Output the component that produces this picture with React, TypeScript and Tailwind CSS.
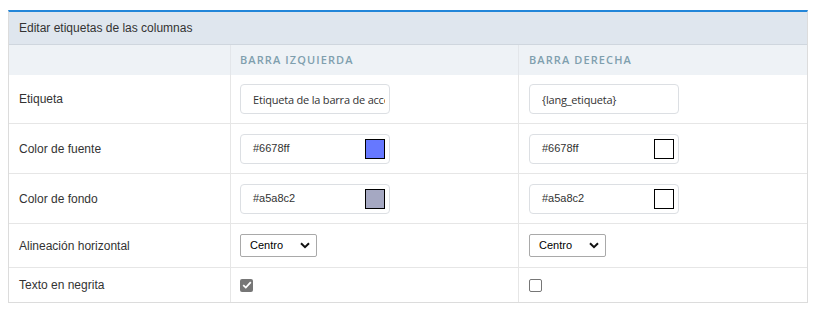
import React from 'react';

const labelFont = { fontFamily: '"Liberation Sans", Arial, sans-serif' };
const headFont = { fontFamily: '"Open Sans", "Noto Sans", sans-serif' };

const Swatch = ({ color }: { color?: string }) => (
  <span
    className="block w-5 h-5 border border-black"
    style={{ backgroundColor: color ?? '#ffffff' }}
  />
);

const ColorField = ({ value, swatch }: { value: string; swatch?: string }) => (
  <div className="flex items-center justify-between w-[150px] h-[30px] pl-3 pr-[4px] bg-white border border-[#dcdfe3] rounded-[4px]">
    <span className="text-[11px] text-[#333]" style={labelFont}>{value}</span>
    <Swatch color={swatch} />
  </div>
);

const TextField = ({ value }: { value: string }) => (
  <input
    readOnly
    value={value}
    className="w-[150px] h-[30px] pl-3 pr-1 bg-white border border-[#dcdfe3] rounded-[4px] text-[11px] text-[#333] outline-none"
    style={{ fontFamily: '"Open Sans", "Noto Sans", sans-serif', letterSpacing: '-0.2px' }}
  />
);

const SelectField = () => (
  <div className="flex items-center justify-between w-[77px] h-[23px] pl-[9px] pr-[6px] bg-white border border-[#a9a9a9] rounded-[2px]">
    <span className="text-[11px] text-black" style={labelFont}>Centro</span>
    <svg width="10" height="7" viewBox="0 0 10 7">
      <path d="M1 1.2 L5 5.2 L9 1.2" fill="none" stroke="#111" strokeWidth="2" />
    </svg>
  </div>
);

const CheckBox = ({ checked }: { checked?: boolean }) =>
  checked ? (
    <span className="flex items-center justify-center w-[13px] h-[13px] rounded-[2px] bg-[#767676]">
      <svg width="10" height="8" viewBox="0 0 10 8">
        <path d="M1.2 4.2 L3.8 6.6 L8.8 1.2" fill="none" stroke="#fff" strokeWidth="1.8" />
      </svg>
    </span>
  ) : (
    <span className="block w-[13px] h-[13px] rounded-[2px] bg-white border border-[#767676]" />
  );

const rows: { label: string; h: string; left: React.ReactNode; right: React.ReactNode }[] = [
  {
    label: 'Etiqueta',
    h: 'h-[49px]',
    left: <TextField value="Etiqueta de la barra de acceso" />,
    right: <TextField value="{lang_etiqueta}" />,
  },
  {
    label: 'Color de fuente',
    h: 'h-[50px]',
    left: <ColorField value="#6678ff" swatch="#6678ff" />,
    right: <ColorField value="#6678ff" />,
  },
  {
    label: 'Color de fondo',
    h: 'h-[50px]',
    left: <ColorField value="#a5a8c2" swatch="#a5a8c2" />,
    right: <ColorField value="#a5a8c2" />,
  },
  {
    label: 'Alineación horizontal',
    h: 'h-[44px]',
    left: <SelectField />,
    right: <SelectField />,
  },
  {
    label: 'Texto en negrita',
    h: 'h-[34px]',
    left: <CheckBox checked />,
    right: <CheckBox />,
  },
];

export default function App() {
  return (
    <div className="w-[817px] h-[311px] bg-white pt-[10px] pl-[8px]">
      <div className="w-[800px] border-t-2 border-[#2386d9] border-x border-b border-x-[#dcdcdc] border-b-[#dcdcdc]">
        {/* Title */}
        <div
          className="h-[33px] flex items-center pl-[10px] bg-[#dfe6ee] border-b border-[#cfd6de] text-[12px] text-[#333]"
          style={labelFont}
        >
          Editar etiquetas de las columnas
        </div>

        {/* Column headers */}
        <div className="grid grid-cols-[222px_288px_1fr] h-[30px] bg-[#eef2f6]">
          <div className="border-r border-[#e3e6ea]" />
          <div
            className="flex items-center pl-[9px] border-r border-[#e3e6ea] text-[11px] font-semibold tracking-[1.1px] text-[#7f9fae]"
            style={headFont}
          >
            BARRA IZQUIERDA
          </div>
          <div
            className="flex items-center pl-[10px] text-[11px] font-semibold tracking-[1.1px] text-[#7f9fae]"
            style={headFont}
          >
            BARRA DERECHA
          </div>
        </div>

        {/* Rows */}
        {rows.map((r, i) => (
          <div
            key={r.label}
            className={`grid grid-cols-[222px_288px_1fr] ${r.h} ${i < rows.length - 1 ? 'border-b border-[#e6e6e6]' : ''}`}
          >
            <div
              className="flex items-center pl-[10px] border-r border-[#e6e6e6] text-[12px] text-[#333]"
              style={labelFont}
            >
              {r.label}
            </div>
            <div className="flex items-center pl-[9px] border-r border-[#e6e6e6]">{r.left}</div>
            <div className="flex items-center pl-[10px]">{r.right}</div>
          </div>
        ))}
      </div>
    </div>
  );
}
